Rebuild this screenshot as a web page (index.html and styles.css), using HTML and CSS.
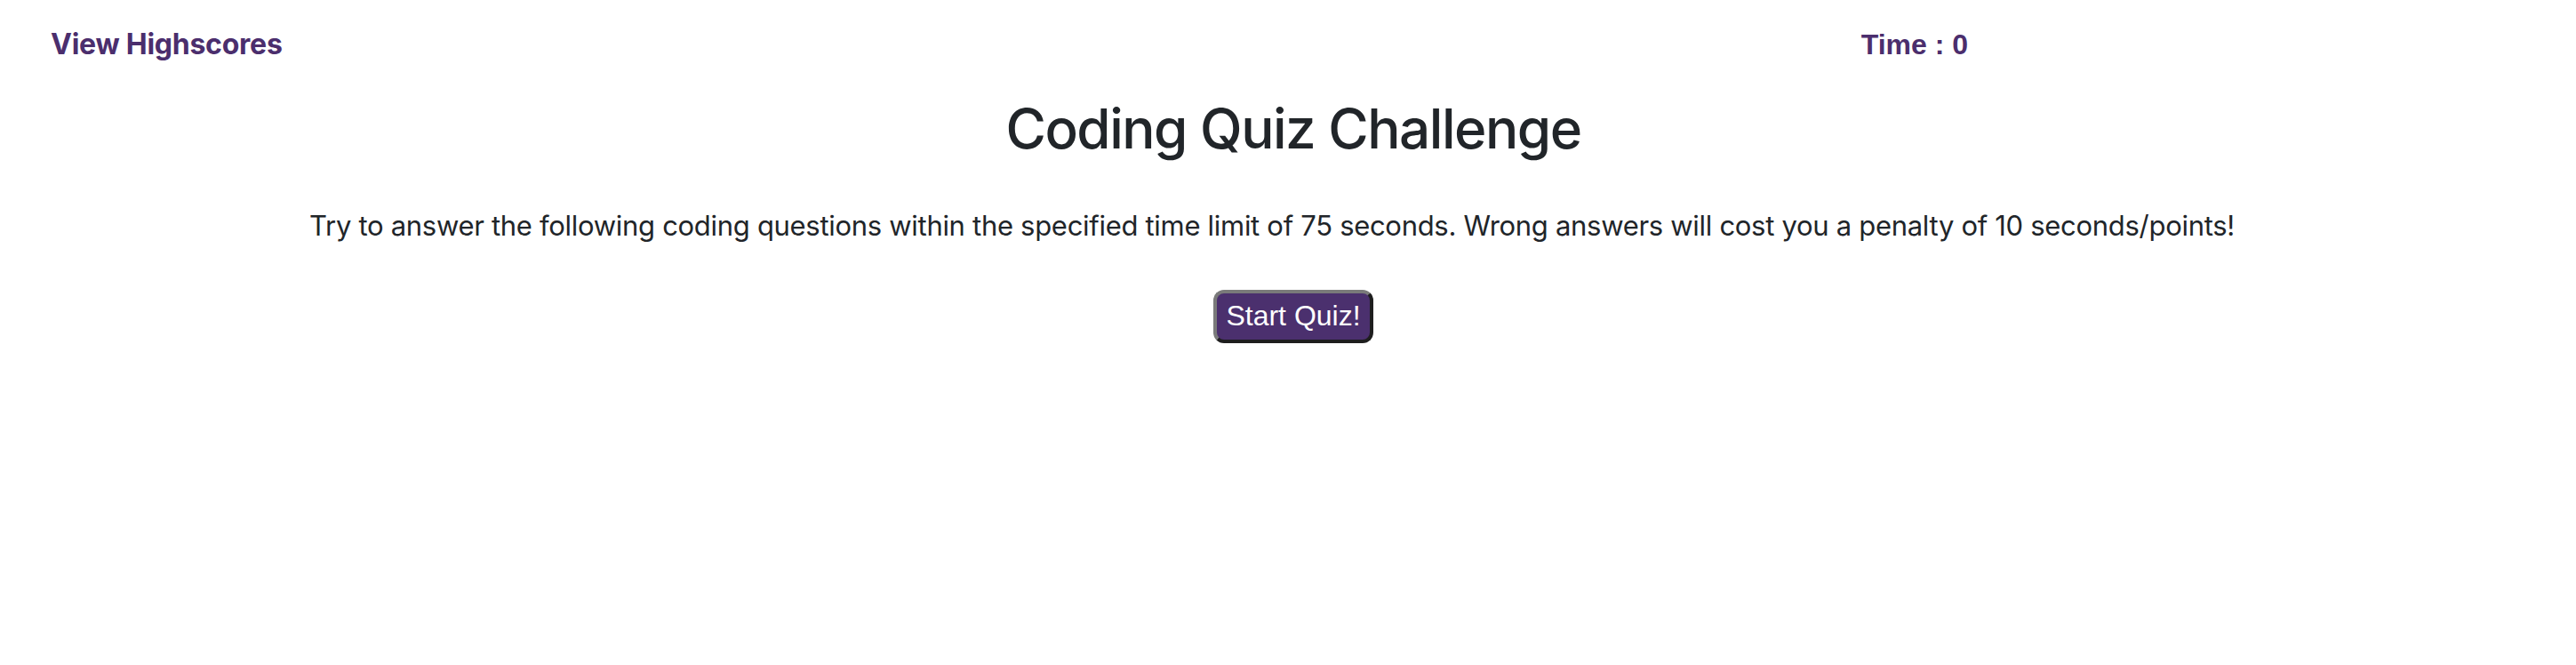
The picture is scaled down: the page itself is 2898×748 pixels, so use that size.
FILE: index.html
```html
<!DOCTYPE html>
<html lang="en">
<head>
<meta charset="utf-8">
<title>Coding Quiz Challenge</title>
<link rel="stylesheet" href="styles.css">
</head>
<body>
  <header class="topbar">
    <a class="highscores" href="#">View Highscores</a>
    <div class="timer">Time : 0</div>
  </header>
  <main class="intro">
    <h1 class="title">Coding Quiz Challenge</h1>
    <p class="lead">Try to answer the following coding questions within the specified time limit of 75 seconds. Wrong answers will cost you a penalty of 10 seconds/points!</p>
    <button class="start-btn" type="button">Start Quiz!</button>
  </main>
</body>
</html>
```

FILE: styles.css
```css
html, body {
  margin: 0;
  padding: 0;
  background: #ffffff;
}

body {
  font-family: Inter, "Noto Sans", sans-serif;
  color: #212529;
}

.topbar {
  display: flex;
  justify-content: space-between;
  align-items: baseline;
  padding: 30px 684px 0 57px;
}

.highscores {
  font-family: Inter, sans-serif;
  font-weight: 700;
  font-size: 32px;
  line-height: 40px;
  letter-spacing: -0.25px;
  color: #4b2e6d;
  text-decoration: none;
}

.timer {
  font-family: "Liberation Sans", Arial, sans-serif;
  font-weight: 700;
  font-size: 32px;
  line-height: 40px;
  color: #4b2e6d;
}

.intro {
  display: flex;
  flex-direction: column;
  align-items: center;
  text-align: center;
  padding-left: 12px;
}

.title {
  margin: 37px 0 0;
  font-size: 62px;
  font-weight: 500;
  line-height: 76.8px;
  letter-spacing: -1.5px;
  color: #212529;
}

.lead {
  margin: 46px 0 0;
  padding-right: 48px;
  font-size: 31px;
  line-height: 48px;
  letter-spacing: -0.3px;
  font-weight: 400;
  color: #212529;
}

.start-btn {
  margin-top: 48px;
  font-family: "Liberation Sans", Arial, sans-serif;
  font-size: 32px;
  line-height: 37px;
  color: #ffffff;
  background: #4b306e;
  border: 4px solid;
  border-color: #7a7a7a #1e1e1e #1e1e1e #7a7a7a;
  border-radius: 12px;
  padding: 7px 10px 8px;
  cursor: pointer;
}
```
